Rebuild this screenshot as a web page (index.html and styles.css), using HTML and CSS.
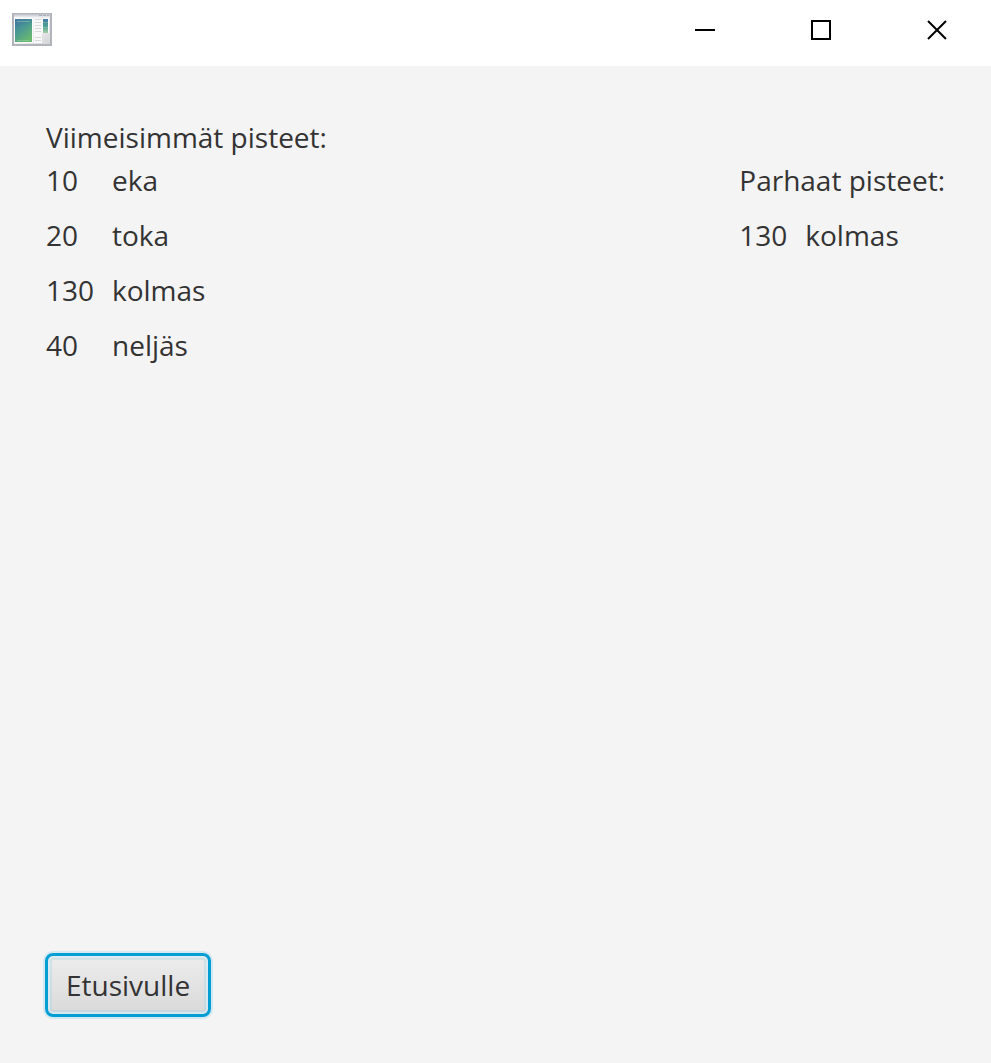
FILE: index.html
```html
<!DOCTYPE html>
<html lang="fi">
<head>
<meta charset="utf-8">
<title>Pisteet</title>
<link rel="stylesheet" href="styles.css">
</head>
<body>
<header class="titlebar">
  <svg class="app-icon" width="40" height="34" viewBox="0 0 40 34" aria-hidden="true">
    <defs>
      <linearGradient id="frame" x1="0" y1="0" x2="1" y2="1">
        <stop offset="0" stop-color="#f4f5f6"/><stop offset=".6" stop-color="#ececee"/><stop offset="1" stop-color="#d2d3d6"/>
      </linearGradient>
      <linearGradient id="screen" x1="0" y1="0" x2=".6" y2="1">
        <stop offset="0" stop-color="#4379a2"/><stop offset=".5" stop-color="#4a9992"/><stop offset="1" stop-color="#68b872"/>
      </linearGradient>
      <linearGradient id="strip" x1="0" y1="0" x2="0" y2="1">
        <stop offset="0" stop-color="#4378a8"/><stop offset=".5" stop-color="#4d9e96"/><stop offset="1" stop-color="#a5cfa6"/>
      </linearGradient>
    </defs>
    <rect x="1" y="1" width="38" height="31" fill="url(#frame)" stroke="#b2b4bc" stroke-width="2"/>
    <path d="M2 2.500H38" stroke="#d3d5dd" stroke-width="2"/>
    <path d="M27 2.500H30M31 2.500H34M35 2.500H37" stroke="#a9acb8"/>
    <rect x="2" y="5" width="19" height="25" fill="#fafafa"/>
    <rect x="3" y="6" width="17" height="23" fill="url(#screen)"/>
    <path d="M3 15C8 11 14 10 20 10V6H3Z" fill="#3a70a6" opacity=".2"/>
    <path d="M5 8.500H18M5 27.500H18" stroke="#a8ddaa" opacity=".4"/>
    <rect x="22" y="5" width="8" height="25" fill="#f8f8f8"/>
    <path d="M23 6.500H29M23 9.500H29M23 12.500H29M23 15.500H29M23 18.500H29M23 24.500H29M23 27.500H29" stroke="#d6d8da"/>
    <rect x="30" y="5" width="7" height="15" fill="#fafafa"/>
    <rect x="31" y="6" width="5" height="14" fill="url(#strip)"/>
    <path d="M31 9.500H36M31 14.500H36" stroke="#9bcdb5" opacity=".4"/>
  </svg>
  <div class="window-controls">
    <button class="window-button" type="button" aria-label="Pienennä">
      <svg width="22" height="22" viewBox="0 0 22 22"><path d="M1 11H21" stroke="#000" stroke-width="2"/></svg>
    </button>
    <button class="window-button" type="button" aria-label="Suurenna">
      <svg width="22" height="22" viewBox="0 0 22 22"><path d="M2 2H20V20H2Z" fill="none" stroke="#000" stroke-width="2"/></svg>
    </button>
    <button class="window-button" type="button" aria-label="Sulje">
      <svg width="22" height="22" viewBox="0 0 22 22"><path d="M2 2L20 20M20 2L2 20" stroke="#000" stroke-width="2"/></svg>
    </button>
  </div>
</header>
<main class="content">
  <section class="scores">
    <h2 class="heading">Viimeisimmät pisteet:</h2>
    <div class="columns">
      <dl class="list">
        <dt>10</dt><dd>eka</dd>
        <dt>20</dt><dd>toka</dd>
        <dt>130</dt><dd>kolmas</dd>
        <dt>40</dt><dd>neljäs</dd>
      </dl>
      <div class="best">
        <h2 class="heading">Parhaat pisteet:</h2>
        <dl class="list">
          <dt>130</dt><dd>kolmas</dd>
        </dl>
      </div>
    </div>
  </section>
  <button class="home-button" type="button">Etusivulle</button>
</main>
</body>
</html>
```
FILE: styles.css
```css
* { box-sizing: border-box; }

body {
  margin: 0;
  min-height: 100vh;
  display: flex;
  flex-direction: column;
  background: #f4f4f4;
  color: #333;
  font: 28px/40px "Segoe UI", "Open Sans", "Noto Sans", sans-serif;
}

.titlebar {
  display: flex;
  align-items: flex-start;
  justify-content: space-between;
  height: 66px;
  padding-left: 12px;
  background: #fff;
}

.app-icon { margin-top: 13px; }

.window-controls { display: flex; }

.window-button {
  display: flex;
  align-items: center;
  justify-content: center;
  width: 116px;
  height: 60px;
  padding: 0 0 0 8px;
  border: 0;
  background: transparent;
}

.content {
  flex: 1;
  display: flex;
  flex-direction: column;
  align-items: flex-start;
  justify-content: space-between;
  padding: 51px 45px 46px;
}

.scores {
  width: 100%;
  padding: 0 1px;
}

.heading {
  margin: 0;
  font-size: 28px;
  font-weight: 400;
}

.columns {
  display: flex;
  align-items: flex-start;
  justify-content: space-between;
  margin-top: 3px;
}

.list {
  display: grid;
  grid-template-columns: 51px auto;
  justify-content: start;
  gap: 15px;
  margin: 0;
}

.list dd { margin: 0; }

.best {
  display: flex;
  flex-direction: column;
  gap: 15px;
}

.home-button {
  padding: 9px 18px;
  border: 3px solid #039ed3;
  border-radius: 8px;
  background: linear-gradient(#ededed, #d9d9d9);
  box-shadow:
    0 0 0 2px #d3e9f1,
    inset 0 0 0 2px rgba(222, 240, 247, 0.7),
    inset 0 0 0 4px rgba(180, 215, 226, 0.5);
  color: #333;
  font: inherit;
}
```
